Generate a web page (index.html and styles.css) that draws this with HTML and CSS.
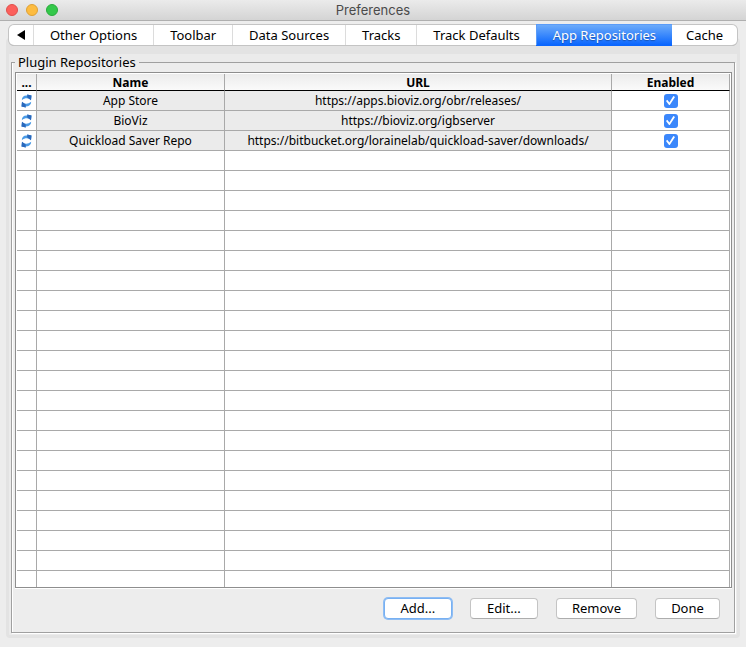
FILE: index.html
```html
<!DOCTYPE html>
<html lang="en">
<head>
  <meta charset="UTF-8" />
  <meta name="viewport" content="width=device-width, initial-scale=1.0" />
  <title>Preferences</title>
  <link rel="stylesheet" href="styles.css">
</head>
<body>
  <svg class="sprite" aria-hidden="true">
    <symbol id="refresh" viewBox="0 0 11 14">
      <path fill="#4b9be6" d="M.8 6.200C.9 3 3 1.200 6.500 1.700L6.200.5 10.500 1.500 10 6.200 8.600 5C6 3.900 3.500 4.200.8 6.200z"/>
      <path fill="#2a68bb" d="M6.200.5 10.500 1.500 10 6.200 6.300 3.400z"/>
      <path fill="#4b9be6" d="M10.200 7.800C10.100 11 8 12.800 4.500 12.300L4.800 13.500.5 12.500 1 7.800 2.400 9C5 10.100 7.500 9.800 10.200 7.800z"/>
      <path fill="#2a68bb" d="M4.800 13.500.5 12.500 1 7.800 4.700 10.600z"/>
    </symbol>
  </svg>

  <header class="titlebar">
    <div class="lights">
      <button class="light close" aria-label="Close"></button>
      <button class="light minimize" aria-label="Minimize"></button>
      <button class="light maximize" aria-label="Zoom"></button>
    </div>
    <h1>Preferences</h1>
  </header>

  <main class="content">
    <div class="tabs" role="tablist">
      <button class="tab scroll" aria-label="Previous tabs">
        <svg viewBox="0 0 8 10" aria-hidden="true"><path d="M8 0v10L0 5z"/></svg>
      </button>
      <button class="tab" role="tab">Other Options</button>
      <button class="tab" role="tab">Toolbar</button>
      <button class="tab" role="tab">Data Sources</button>
      <button class="tab" role="tab">Tracks</button>
      <button class="tab" role="tab">Track Defaults</button>
      <button class="tab selected" role="tab" aria-selected="true">App Repositories</button>
      <button class="tab" role="tab">Cache</button>
    </div>

    <section class="panel" role="tabpanel">
      <fieldset class="group">
        <legend>Plugin Repositories</legend>
        <div class="table-pane">
          <table>
            <colgroup>
              <col class="col-refresh">
              <col class="col-name">
              <col>
              <col class="col-enabled">
            </colgroup>
            <thead>
              <tr><th>...</th><th>Name</th><th>URL</th><th>Enabled</th></tr>
            </thead>
            <tbody>
              <tr>
                <td><svg class="refresh" aria-label="Refresh"><use href="#refresh"/></svg></td>
                <td class="locked">App Store</td>
                <td class="locked">https://apps.bioviz.org/obr/releases/</td>
                <td><input type="checkbox" aria-label="App Store enabled" checked></td>
              </tr>
              <tr>
                <td><svg class="refresh" aria-label="Refresh"><use href="#refresh"/></svg></td>
                <td class="locked">BioViz</td>
                <td class="locked">https://bioviz.org/igbserver</td>
                <td><input type="checkbox" aria-label="BioViz enabled" checked></td>
              </tr>
              <tr>
                <td><svg class="refresh" aria-label="Refresh"><use href="#refresh"/></svg></td>
                <td class="locked">Quickload Saver Repo</td>
                <td class="locked">https://bitbucket.org/lorainelab/quickload-saver/downloads/</td>
                <td><input type="checkbox" aria-label="Quickload Saver Repo enabled" checked></td>
              </tr>
              <tr><td></td><td></td><td></td><td></td></tr>
              <tr><td></td><td></td><td></td><td></td></tr>
              <tr><td></td><td></td><td></td><td></td></tr>
              <tr><td></td><td></td><td></td><td></td></tr>
              <tr><td></td><td></td><td></td><td></td></tr>
              <tr><td></td><td></td><td></td><td></td></tr>
              <tr><td></td><td></td><td></td><td></td></tr>
              <tr><td></td><td></td><td></td><td></td></tr>
              <tr><td></td><td></td><td></td><td></td></tr>
              <tr><td></td><td></td><td></td><td></td></tr>
              <tr><td></td><td></td><td></td><td></td></tr>
              <tr><td></td><td></td><td></td><td></td></tr>
              <tr><td></td><td></td><td></td><td></td></tr>
              <tr><td></td><td></td><td></td><td></td></tr>
              <tr><td></td><td></td><td></td><td></td></tr>
              <tr><td></td><td></td><td></td><td></td></tr>
              <tr><td></td><td></td><td></td><td></td></tr>
              <tr><td></td><td></td><td></td><td></td></tr>
              <tr><td></td><td></td><td></td><td></td></tr>
              <tr><td></td><td></td><td></td><td></td></tr>
              <tr><td></td><td></td><td></td><td></td></tr>
              <tr><td></td><td></td><td></td><td></td></tr>
            </tbody>
          </table>
        </div>
        <div class="actions">
          <button class="btn focused">Add...</button>
          <button class="btn">Edit...</button>
          <button class="btn">Remove</button>
          <button class="btn">Done</button>
        </div>
      </fieldset>
    </section>
  </main>
</body>
</html>
```
FILE: styles.css
```css
* {
  box-sizing: border-box;
}
body {
  margin: 0;
  height: 100vh;
  display: flex;
  flex-direction: column;
  background: #ededed;
  color: #000;
  font-family: "Noto Sans", "Open Sans", sans-serif;
  font-size: 13px;
  line-height: 16px;
}
button {
  font: inherit;
  color: inherit;
  padding: 0;
}
.sprite {
  position: absolute;
  width: 0;
  height: 0;
}

/* title bar */
.titlebar {
  display: grid;
  grid-template-columns: 1fr auto 1fr;
  align-items: center;
  height: 21px;
  padding: 0 6px;
  background: linear-gradient(#ebebeb, #d4d4d4);
  border-bottom: 1px solid #afafaf;
}
.titlebar h1 {
  margin: 0;
  font-family: Inter, sans-serif;
  font-size: 13px;
  font-weight: normal;
  color: #4a4a4a;
}
.lights {
  display: flex;
  gap: 8px;
}
.light {
  width: 12px;
  height: 12px;
  border: 1px solid;
  border-radius: 50%;
}
.close {
  background: #fc605c;
  border-color: #e0504c;
}
.minimize {
  background: #fdbc40;
  border-color: #dfa133;
}
.maximize {
  background: #34c84a;
  border-color: #2aab3c;
}

/* tabs */
.content {
  flex: 1;
  min-height: 0;
  display: flex;
  flex-direction: column;
  padding: 4px 6px 9px;
}
.tabs {
  position: relative;
  z-index: 1;
  display: flex;
  height: 20px;
  margin: 0 3px 1px;
  background: #fff;
  border-radius: 5px;
  box-shadow: 0 0 0 1px #c4c4c4, 0 1px 0 #a8a8a8;
}
.tab {
  flex: auto;
  background: none;
  border: none;
  border-left: 1px solid #dcdcdc;
  white-space: nowrap;
}
.tab.scroll {
  flex: 0 0 24px;
  border-left: none;
}
.tab.scroll svg {
  display: block;
  width: 8px;
  height: 10px;
  margin: 0 auto;
}
.tab.selected {
  background: linear-gradient(#6cabfa, #0a66fe);
  border-color: #5b9cf8;
  box-shadow: 0 1px 0 #0a66fe, 0 -1px 0 #5b9cf8;
  color: #fff;
  text-shadow: 0 1px 1px rgba(0, 0, 0, 0.3);
}
.tab:last-child {
  flex: 0 0 65px;
  border-left: none;
}

/* panel */
.panel {
  flex: 1;
  min-height: 0;
  display: flex;
  margin-top: -8px;
  padding: 0 2px 2px;
  background: #ebebeb;
  border: 3px solid #e3e3e3;
  border-top-width: 16px;
  border-radius: 4px;
}
.group {
  flex: 1;
  min-width: 0;
  display: flex;
  flex-direction: column;
  margin: 0;
  padding: 2px 2px 13px 3px;
  background: #ededed;
  border: 1px solid #a0a0a0;
  box-shadow: 1px 1px 0 #fff, inset 1px 0 0 #fff;
}
.group legend {
  padding: 0 3px;
  margin-left: 0;
}

/* table */
.table-pane {
  flex: 1;
  min-height: 0;
  overflow: hidden;
  padding: 1px;
  background: #fff;
  border: 1px solid #8e8e8e;
  box-shadow: 0 1px 0 #fff;
}
table {
  width: 100%;
  table-layout: fixed;
  border-collapse: separate;
  border-spacing: 0;
}
.col-refresh {
  width: 20px;
}
.col-name {
  width: 188px;
}
.col-enabled {
  width: 118px;
}
th,
td {
  height: 20px;
  padding: 0;
  border-right: 1px solid #a9a9a9;
  border-bottom: 1px solid #a9a9a9;
  font-size: 12px;
  text-align: center;
  white-space: nowrap;
}
th {
  height: 17px;
  line-height: 15px;
  background: linear-gradient(#ececec, #fafafa);
  border-bottom-color: #000;
}
.locked {
  background: #ebebeb;
}
.refresh {
  display: block;
  width: 11px;
  height: 14px;
  margin: 0 auto;
}
input[type="checkbox"] {
  appearance: none;
  display: grid;
  place-items: center;
  width: 14px;
  height: 14px;
  margin: 0 auto;
  border-radius: 3px;
  background: #3b87fb;
}
input[type="checkbox"]:checked::before {
  content: "";
  width: 9px;
  height: 9px;
  background: #fff;
  clip-path: polygon(0 55%, 14% 42%, 38% 72%, 82% 0, 100% 10%, 42% 100%, 34% 100%);
}

/* buttons */
.actions {
  display: flex;
  justify-content: flex-end;
  gap: 18px;
  padding: 10px 12px 0 0;
}
.btn {
  min-width: 68px;
  height: 21px;
  padding: 0 15px;
  background: #fff;
  border: 1px solid #c4c4c4;
  border-bottom-color: #adadad;
  border-radius: 4px;
  line-height: 17px;
}
.btn:last-child {
  min-width: 65px;
}
.btn.focused {
  border-color: #77b0f2;
  box-shadow: 0 0 0 1px #8fbdf3;
}
```
